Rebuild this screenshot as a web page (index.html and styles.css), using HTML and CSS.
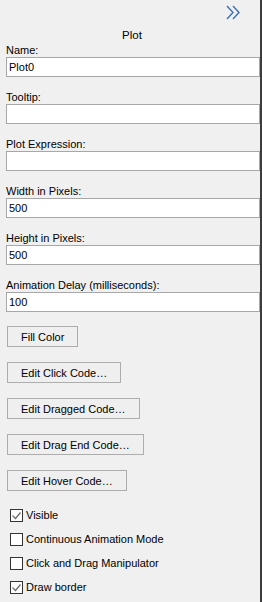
FILE: index.html
```html
<!DOCTYPE html>
<html lang="en">
<head>
  <meta charset="UTF-8" />
  <meta name="viewport" content="width=device-width, initial-scale=1.0"/>
  <title>Plot Properties</title>
  <link rel="stylesheet" href="styles.css">
</head>
<body>
  <div class="panel">
    <div class="panel-top">
      <svg class="collapse-icon" width="14" height="15" viewBox="0 0 14 15">
        <path d="M1 1 L7 7.5 L1 14" />
        <path d="M7 1 L13 7.5 L7 14" />
      </svg>
    </div>
    <div class="panel-title">Plot</div>

    <div class="field">
      <label>Name:</label>
      <input type="text" value="Plot0">
    </div>
    <div class="field">
      <label>Tooltip:</label>
      <input type="text" value="">
    </div>
    <div class="field">
      <label>Plot Expression:</label>
      <input type="text" value="">
    </div>
    <div class="field">
      <label>Width in Pixels:</label>
      <input type="text" value="500">
    </div>
    <div class="field">
      <label>Height in Pixels:</label>
      <input type="text" value="500">
    </div>
    <div class="field">
      <label>Animation Delay (milliseconds):</label>
      <input type="text" value="100">
    </div>

    <div class="button-list">
      <button class="btn">Fill Color</button>
      <button class="btn">Edit Click Code…</button>
      <button class="btn">Edit Dragged Code…</button>
      <button class="btn">Edit Drag End Code…</button>
      <button class="btn">Edit Hover Code…</button>
    </div>

    <div class="check-list">
      <div class="check checked"><span class="box"><svg width="11" height="11" viewBox="0 0 11 11"><path d="M1.5 5.5 L4.5 8.5 L9.5 2.5" /></svg></span>Visible</div>
      <div class="check"><span class="box"></span>Continuous Animation Mode</div>
      <div class="check"><span class="box"></span>Click and Drag Manipulator</div>
      <div class="check checked"><span class="box"><svg width="11" height="11" viewBox="0 0 11 11"><path d="M1.5 5.5 L4.5 8.5 L9.5 2.5" /></svg></span>Draw border</div>
    </div>
  </div>
</body>
</html>
```

FILE: styles.css
```css
* { box-sizing: border-box; margin: 0; padding: 0; }
html, body {
  background: #f0f0f0;
  font-family: 'Liberation Sans', Arial, sans-serif;
  font-size: 11px;
  color: #000;
}
.panel {
  width: 262px;
  height: 602px;
  background: #f0f0f0;
  border-right: 2px solid #3c3c3c;
  padding-left: 6px;
}
.panel-top {
  height: 29px;
  display: flex;
  justify-content: flex-end;
  align-items: flex-start;
  padding: 5px 20px 0 0;
}
.collapse-icon path {
  fill: none;
  stroke: #3d6fb6;
  stroke-width: 1.4;
}
.panel-title {
  text-align: center;
  line-height: 13px;
  font-size: 11.5px;
  margin-bottom: 2px;
  padding-right: 2px;
}
.field {
  margin-bottom: 14px;
}
.field label {
  display: block;
  line-height: 13px;
}
.field input {
  display: block;
  width: 100%;
  height: 20px;
  border: 1px solid #a7a7a7;
  background: #fff;
  padding: 0 2px;
  font-family: inherit;
  font-size: 11px;
  color: #000;
  outline: none;
}
.button-list {
  display: flex;
  flex-direction: column;
  align-items: flex-start;
  gap: 15px;
  padding-left: 1px;
}
.btn {
  height: 21px;
  padding: 0 13px;
  border: 1px solid #adadad;
  background: #efefef;
  font-family: inherit;
  font-size: 11px;
  color: #000;
}
.check-list {
  margin-top: 12px;
}
.check {
  display: flex;
  align-items: center;
  height: 24px;
  padding-left: 4px;
}
.check .box {
  width: 13px;
  height: 13px;
  border: 1px solid #333;
  background: #fff;
  margin-right: 3px;
  display: flex;
  align-items: center;
  justify-content: center;
}
.check .box path {
  fill: none;
  stroke: #6a6a6a;
  stroke-width: 1.2;
}
```
